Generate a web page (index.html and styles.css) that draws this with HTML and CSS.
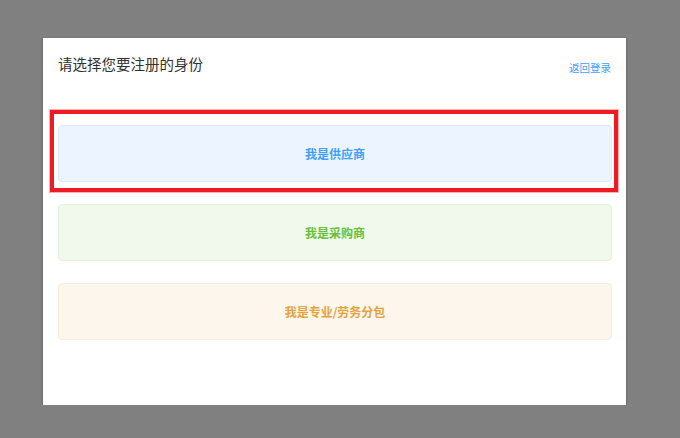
FILE: index.html
```html
<!DOCTYPE html>
<html lang="zh-CN">

<head>
    <meta charset="UTF-8">
    <title>选择注册身份</title>
    <link rel="stylesheet" href="styles.css">
</head>

<body>

    <div class="dialog">
        <div class="dialog-header">
            <h2 class="title">请选择您要注册的身份</h2>
            <a class="back" href="#">返回登录</a>
        </div>

        <div class="dialog-body">
            <div class="role-wrap">
                <div class="role role-supplier">我是供应商</div>
                <div class="highlight"></div>
            </div>
            <div class="role role-buyer">我是采购商</div>
            <div class="role role-labor">我是专业/劳务分包</div>
        </div>
    </div>

</body>

</html>
```

FILE: styles.css
```css
* {
    margin: 0;
    box-sizing: border-box;
}

body {
    background-color: #808080;
    padding: 38px 0 0 43px;
    font-family: "Microsoft YaHei", "Noto Sans CJK SC", "Noto Sans", sans-serif;
}

.dialog {
    width: 583px;
    height: 367px;
    background-color: #fff;
    box-shadow: 0 1px 3px rgba(0, 0, 0, 0.3);
}

.dialog-header {
    display: flex;
    justify-content: space-between;
    align-items: flex-start;
    height: 38px;
    padding: 14px 15px 0 15px;
}

.title {
    font-size: 14.5px;
    font-weight: 400;
    line-height: 24px;
    color: #303133;
}

.back {
    font-size: 10.5px;
    line-height: 24px;
    padding-top: 4px;
    color: #409eff;
    text-decoration: none;
}

.dialog-body {
    padding: 49px 14px 0 15px;
}

.role-wrap {
    position: relative;
    margin-bottom: 22px;
}

.role {
    height: 57px;
    margin-bottom: 22px;
    border: 1px solid;
    border-radius: 4px;
    display: flex;
    align-items: center;
    justify-content: center;
    font-size: 12px;
    font-weight: 700;
}

.role-wrap .role {
    margin-bottom: 0;
}

.role-supplier {
    background-color: #ecf5ff;
    border-color: #d9ecff;
    color: #409eff;
}

.role-buyer {
    background-color: #f0f9eb;
    border-color: #e1f3d8;
    color: #67c23a;
}

.role-labor {
    background-color: #fdf6ec;
    border-color: #faecd8;
    color: #e6a23c;
}

/* red frame marking the first option */
.highlight {
    position: absolute;
    left: -8px;
    right: -6px;
    top: -15px;
    bottom: -10px;
    border: 4px solid #ed1c24;
    box-shadow: 0 0 0 1px rgba(237, 28, 36, 0.35);
}
```
